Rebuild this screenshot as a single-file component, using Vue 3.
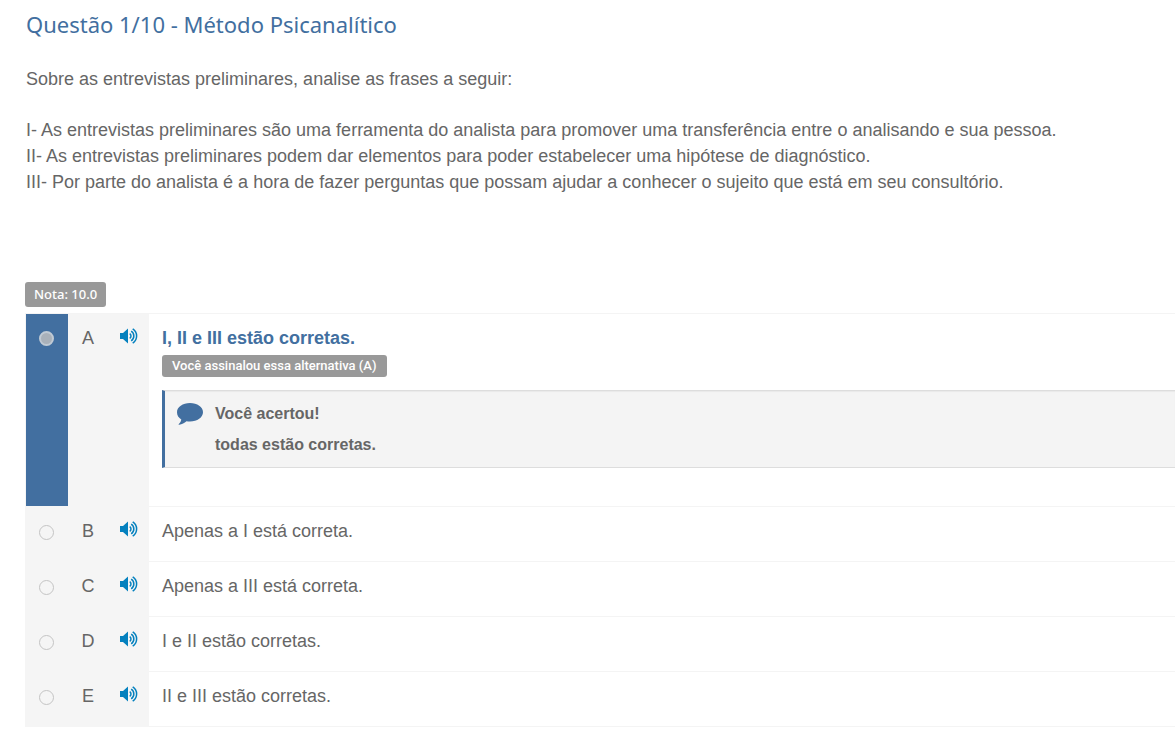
<script setup>
import { ref } from 'vue'

const picked = ref('A')
const statements = [
  'I- As entrevistas preliminares são uma ferramenta do analista para promover uma transferência entre o analisando e sua pessoa.',
  'II- As entrevistas preliminares podem dar elementos para poder estabelecer uma hipótese de diagnóstico.',
  'III- Por parte do analista é a hora de fazer perguntas que possam ajudar a conhecer o sujeito que está em seu consultório.',
]
const options = [
  { id: 'A', text: 'I, II e III estão corretas.', feedback: { title: 'Você acertou!', text: 'todas estão corretas.' } },
  { id: 'B', text: 'Apenas a I está correta.' },
  { id: 'C', text: 'Apenas a III está correta.' },
  { id: 'D', text: 'I e II estão corretas.' },
  { id: 'E', text: 'II e III estão corretas.' },
]
</script>

<template>
  <main class="question">
    <h1>Questão 1/10 - Método Psicanalítico</h1>
    <section class="prompt">
      <p class="lead">Sobre as entrevistas preliminares, analise as frases a seguir:</p>
      <p v-for="s in statements" :key="s">{{ s }}</p>
    </section>
    <span class="badge grade">Nota: 10.0</span>
    <ul class="options">
      <li v-for="o in options" :key="o.id" class="option" :class="{ chosen: o.feedback }">
        <div class="pick">
          <input :id="'opt-' + o.id" v-model="picked" type="radio" name="answer" :value="o.id" disabled />
        </div>
        <div class="letter">{{ o.id }}</div>
        <div class="listen">
          <button type="button" :aria-label="'Ouvir alternativa ' + o.id">
            <svg width="18" height="16" viewBox="0 0 18 16" fill="none" stroke="currentColor" stroke-width="1.5">
              <path d="M0 5h3l5-4.500v15L3 11H0z" fill="currentColor" stroke="none" />
              <path d="M9.700 5.700a2.700 2.700 0 0 1 0 4.600M11.200 3.200a5.700 5.700 0 0 1 0 9.600M12.700 .900a8.400 8.400 0 0 1 0 14.200" />
            </svg>
          </button>
        </div>
        <div class="answer">
          <label :for="'opt-' + o.id">{{ o.text }}</label>
          <template v-if="o.feedback">
            <span class="badge mark">Você assinalou essa alternativa (A)</span>
            <div class="feedback">
              <svg width="26" height="22" viewBox="0 0 26 22" fill="#426fa0">
                <path d="M13 0C20.200 0 26 4.100 26 9.200s-5.800 9.300-13 9.300c-1.200 0-2.400-.1-3.500-.3C7.400 20.100 5 21.300 2.200 21.700c-.5.1-.8-.4-.4-.8 1.400-1.300 2.200-2.600 2.500-4.400C1.600 14.800 0 12.200 0 9.200 0 4.100 5.800 0 13 0z" />
              </svg>
              <div>
                <p>{{ o.feedback.title }}</p>
                <p>{{ o.feedback.text }}</p>
              </div>
            </div>
          </template>
        </div>
      </li>
    </ul>
  </main>
</template>

<style>
body {
  margin: 0;
  background: #fff;
}
</style>

<style scoped>
.question {
  padding: 8px 0 14px 25px;
  color: #666;
  font: 18px/26px "Liberation Sans", Arial, sans-serif;
}
h1 {
  margin: 0 0 25px;
  padding-left: 1px;
  color: #426fa0;
  font: 400 22px/33px "Noto Sans", "Open Sans", sans-serif;
}
p {
  margin: 0;
}
.prompt {
  margin-bottom: 87px;
  padding-left: 1px;
}
.prompt .lead {
  margin-bottom: 25px;
}
.badge {
  display: block;
  width: fit-content;
  padding: 0 9px;
  border-radius: 3px;
  background: #999;
  color: #fff;
}
.grade {
  font: 500 13px/25px "Noto Sans", "Open Sans", sans-serif;
}
.options {
  margin: 6px 0 0;
  padding: 0;
  list-style: none;
  border-top: 1px solid #f4f4f4;
}
.option {
  display: grid;
  grid-template-columns: 43px 40px 41px 1fr;
}
.pick,
.letter,
.listen {
  padding-top: 11px;
  background: #f5f5f5;
  text-align: center;
}
.pick {
  display: flex;
  justify-content: center;
  align-items: flex-start;
}
.chosen .pick {
  box-shadow: inset 1px -1px #f5f5f5;
  background: #426fa0;
}
input {
  appearance: none;
  box-sizing: border-box;
  width: 15px;
  height: 15px;
  margin: 7px 0 0;
  border: 1px solid #c4c4c4;
  border-radius: 50%;
}
.chosen input {
  margin-top: 6px;
  border: 2px solid #c0cad4;
  background: #a9b1ba;
}
button {
  display: block;
  margin: 3px auto 0;
  padding: 0;
  border: 0;
  background: none;
  color: #0480be;
  cursor: pointer;
}
button svg {
  display: block;
}
.answer {
  min-width: 0;
  padding: 11px 0 17px 13px;
  border-bottom: 1px solid #f4f4f4;
}
label {
  display: block;
}
.chosen .answer {
  padding-bottom: 38px;
}
.chosen label {
  color: #426fa0;
  font-weight: 700;
}
.mark {
  margin-top: 4px;
  padding: 0 10px;
  font: 500 13px/22px Roboto, sans-serif;
}
.feedback {
  display: flex;
  gap: 12px;
  margin-top: 13px;
  padding: 7px 12px 7px;
  border: 1px solid #ddd;
  border-width: 1px 0 1px 3px;
  border-left-color: #426fa0;
  background: #f4f4f4;
  box-shadow: inset 0 1px 1px #e9e9e9;
  font: 700 16px/31px "Liberation Sans", Arial, sans-serif;
}
.feedback svg {
  flex: none;
  margin-top: 5px;
}
</style>
